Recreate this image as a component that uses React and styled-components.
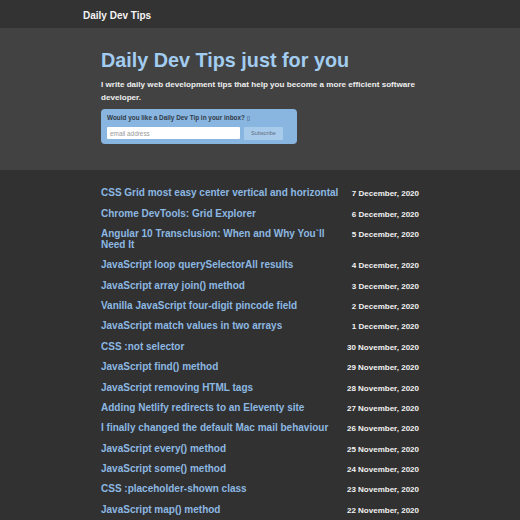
import React from "react";
import styled, { createGlobalStyle } from "styled-components";

const Global = createGlobalStyle`
  html, body { margin: 0; padding: 0; background: #313131; }
  body { font-family: "Liberation Sans", Arial, sans-serif; }
  * { box-sizing: border-box; }
`;

const Header = styled.header`
  background: #333333;
  height: 28px;
  display: flex;
  align-items: center;
`;

const HeaderInner = styled.div`
  width: 354px;
  margin: 0 auto;
`;

const Brand = styled.a`
  color: #f4f4f4;
  font-size: 10px;
  font-weight: bold;
  text-decoration: none;
`;

const Hero = styled.section`
  background: #424242;
  padding: 20px 0 26px;
`;

const Container = styled.div`
  width: 318px;
  margin: 0 auto;
`;

const Title = styled.h1`
  margin: 0;
  font-size: 19.8px;
  line-height: 24px;
  font-weight: bold;
  color: #a3cdf0;
`;

const Intro = styled.p`
  margin: 6px 0 0;
  font-size: 8.1px;
  line-height: 13px;
  font-weight: bold;
  color: #efefef;
`;

const SignupBox = styled.form`
  margin-top: 5px;
  width: 196px;
  background: #89b6e1;
  border-radius: 4px;
  padding: 4px 6px 4px;
`;

const SignupLabel = styled.div`
  font-size: 6.4px;
  line-height: 10px;
  font-weight: bold;
  color: #2f3a46;
  margin-bottom: 3.5px;
`;

const Tofu = styled.span`
  font-family: "DejaVu Sans", sans-serif;
  font-weight: normal;
  font-size: 6px;
`;

const SignupRow = styled.div`
  display: flex;
  align-items: center;
  gap: 4px;
`;

const EmailInput = styled.input`
  width: 133px;
  height: 12.5px;
  border: none;
  border-radius: 1px;
  background: #ffffff;
  padding: 0 3px;
  font-family: "Liberation Sans", Arial, sans-serif;
  font-size: 6.4px;
  outline: none;
  &::placeholder { color: #9a9a9a; }
`;

const SubscribeButton = styled.button`
  width: 39px;
  height: 13px;
  border: none;
  border-radius: 1px;
  background: #a9cbeb;
  color: #5d6d7d;
  font-family: "Liberation Sans", Arial, sans-serif;
  font-size: 5.6px;
  padding: 0;
`;

const ListSection = styled.main`
  background: #313131;
  padding: 13px 0 0;
`;

const PostList = styled.ul`
  list-style: none;
  margin: 0;
  padding: 0;
`;

const PostRow = styled.li`
  display: flex;
  align-items: baseline;
  padding: 4.7px 0;
`;

const PostLink = styled.a`
  flex: 1;
  margin-right: 10px;
  font-size: 10px;
  line-height: 11px;
  font-weight: bold;
  color: #8cb8e2;
  text-decoration: none;
`;

const PostDate = styled.span`
  flex-shrink: 0;
  font-size: 8px;
  font-weight: bold;
  color: #f2f2f2;
`;

const posts = [
  ["CSS Grid most easy center vertical and horizontal", "7 December, 2020"],
  ["Chrome DevTools: Grid Explorer", "6 December, 2020"],
  ["Angular 10 Transclusion: When and Why You`ll Need It", "5 December, 2020"],
  ["JavaScript loop querySelectorAll results", "4 December, 2020"],
  ["JavaScript array join() method", "3 December, 2020"],
  ["Vanilla JavaScript four-digit pincode field", "2 December, 2020"],
  ["JavaScript match values in two arrays", "1 December, 2020"],
  ["CSS :not selector", "30 November, 2020"],
  ["JavaScript find() method", "29 November, 2020"],
  ["JavaScript removing HTML tags", "28 November, 2020"],
  ["Adding Netlify redirects to an Eleventy site", "27 November, 2020"],
  ["I finally changed the default Mac mail behaviour", "26 November, 2020"],
  ["JavaScript every() method", "25 November, 2020"],
  ["JavaScript some() method", "24 November, 2020"],
  ["CSS :placeholder-shown class", "23 November, 2020"],
  ["JavaScript map() method", "22 November, 2020"],
];

export default function App() {
  return (
    <>
      <Global />
      <Header>
        <HeaderInner>
          <Brand href="#">Daily Dev Tips</Brand>
        </HeaderInner>
      </Header>
      <Hero>
        <Container>
          <Title>Daily Dev Tips just for you</Title>
          <Intro>
            I write daily web development tips that help you become a more efficient software developer.
          </Intro>
          <SignupBox onSubmit={(e) => e.preventDefault()}>
            <SignupLabel>
              Would you like a Daily Dev Tip in your inbox? <Tofu>▯</Tofu>
            </SignupLabel>
            <SignupRow>
              <EmailInput placeholder="email address" />
              <SubscribeButton type="submit">Subscribe</SubscribeButton>
            </SignupRow>
          </SignupBox>
        </Container>
      </Hero>
      <ListSection>
        <Container>
          <PostList>
            {posts.map(([title, date]) => (
              <PostRow key={title}>
                <PostLink href="#">{title}</PostLink>
                <PostDate>{date}</PostDate>
              </PostRow>
            ))}
          </PostList>
        </Container>
      </ListSection>
    </>
  );
}
